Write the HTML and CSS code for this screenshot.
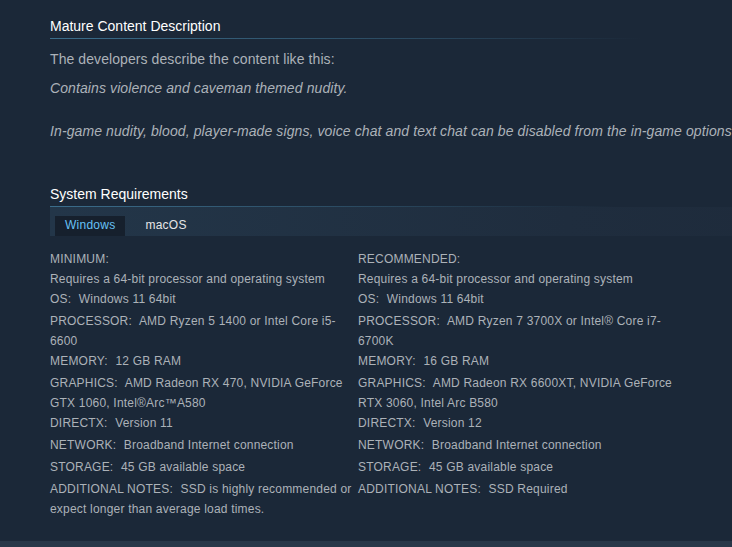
FILE: index.html
```html
<!DOCTYPE html>
<html>
<head>
<meta charset="utf-8">
<link rel="stylesheet" href="styles.css">
</head>
<body>
<div class="page">
  <section class="mature">
    <h2 class="block-title">Mature Content Description</h2>
    <p class="desc-intro">The developers describe the content like this:</p>
    <p class="desc-body"><i>Contains violence and caveman themed nudity.<br><br>In-game nudity, blood, player-made signs, voice chat and text chat can be disabled from the in-game options.</i></p>
  </section>

  <section class="sysreq">
    <h2 class="block-title sysreq-title">System Requirements</h2>
    <div class="tabs">
      <div class="tab active">Windows</div>
      <div class="tab">macOS</div>
    </div>
    <div class="req-cols">
      <ul class="req-list">
        <li class="req-head"><strong>MINIMUM:</strong></li>
        <li>Requires a 64-bit processor and operating system</li>
        <li class="lab"><strong>OS:</strong> Windows 11 64bit</li>
        <li class="lab"><strong>PROCESSOR:</strong> AMD Ryzen 5 1400 or Intel Core i5-6600</li>
        <li class="lab"><strong>MEMORY:</strong> 12 GB RAM</li>
        <li class="lab"><strong>GRAPHICS:</strong> AMD Radeon RX 470, NVIDIA GeForce GTX 1060, Intel®Arc™A580</li>
        <li class="lab"><strong>DIRECTX:</strong> Version 11</li>
        <li class="lab"><strong>NETWORK:</strong> Broadband Internet connection</li>
        <li class="lab"><strong>STORAGE:</strong> 45 GB available space</li>
        <li class="lab"><strong>ADDITIONAL NOTES:</strong> SSD is highly recommended or expect longer than average load times.</li>
      </ul>
      <ul class="req-list">
        <li class="req-head"><strong>RECOMMENDED:</strong></li>
        <li>Requires a 64-bit processor and operating system</li>
        <li class="lab"><strong>OS:</strong> Windows 11 64bit</li>
        <li class="lab"><strong>PROCESSOR:</strong> AMD Ryzen 7 3700X or Intel® Core i7-6700K</li>
        <li class="lab"><strong>MEMORY:</strong> 16 GB RAM</li>
        <li class="lab"><strong>GRAPHICS:</strong> AMD Radeon RX 6600XT, NVIDIA GeForce RTX 3060, Intel Arc B580</li>
        <li class="lab"><strong>DIRECTX:</strong> Version 12</li>
        <li class="lab"><strong>NETWORK:</strong> Broadband Internet connection</li>
        <li class="lab"><strong>STORAGE:</strong> 45 GB available space</li>
        <li class="lab"><strong>ADDITIONAL NOTES:</strong> SSD Required</li>
      </ul>
    </div>
  </section>
</div>
<div class="footer-strip"></div>
</body>
</html>
```

FILE: styles.css
```css
html, body {
  margin: 0;
  padding: 0;
  background: #1b2838;
  overflow: hidden;
}

body {
  font-family: "Liberation Sans", Arial, sans-serif;
  color: #acb2b8;
}

.page {
  width: 940px;
  padding: 16px 0 0 50px;
}

.block-title {
  margin: 0;
  font-size: 14px;
  font-weight: normal;
  line-height: 20px;
  color: #ffffff;
  padding-bottom: 2px;
  border-bottom: 1px solid transparent;
  border-image: linear-gradient(90deg, #3b6d8b 0%, rgba(59, 109, 139, 0.45) 40%, rgba(59, 109, 139, 0) 63%) 1;
}

.desc-intro {
  margin: 10px 0 0;
  font-size: 14px;
  line-height: 21.5px;
  letter-spacing: 0.08px;
}

.desc-body {
  margin: 7px 0 0;
  font-size: 14px;
  line-height: 21.5px;
  letter-spacing: 0.1px;
}

.sysreq {
  margin-top: 42px;
}

.sysreq-title {
  border-image: linear-gradient(90deg, #3b6d8b 0%, rgba(59, 109, 139, 0.45) 35%, rgba(59, 109, 139, 0) 60%) 1;
}

.tabs {
  display: flex;
  gap: 10px;
  padding: 9px 0 0 5px;
  height: 20px;
  background: linear-gradient(90deg, #233649 0%, #1f2d3e 55%, #1d2939 100%);
}

.tab {
  padding: 0 10px;
  font-size: 12px;
  line-height: 19px;
  letter-spacing: 0.25px;
  color: #e6e6e6;
}

.tab.active {
  background: #16202d;
  color: #67c1f5;
}

.req-cols {
  display: grid;
  grid-template-columns: 304px 325px;
  column-gap: 4px;
  margin-top: 13px;
}

.req-list {
  list-style: none;
  margin: 0;
  padding: 0;
  font-size: 12px;
  line-height: 20px;
  letter-spacing: 0.2px;
  color: #acb2b8;
}

.req-list strong {
  font-weight: normal;
  margin-right: 4px;
}

.req-list li.lab {
  min-height: 22px;
}

.footer-strip {
  margin-top: 22px;
  height: 40px;
  background: #283748;
}
```
